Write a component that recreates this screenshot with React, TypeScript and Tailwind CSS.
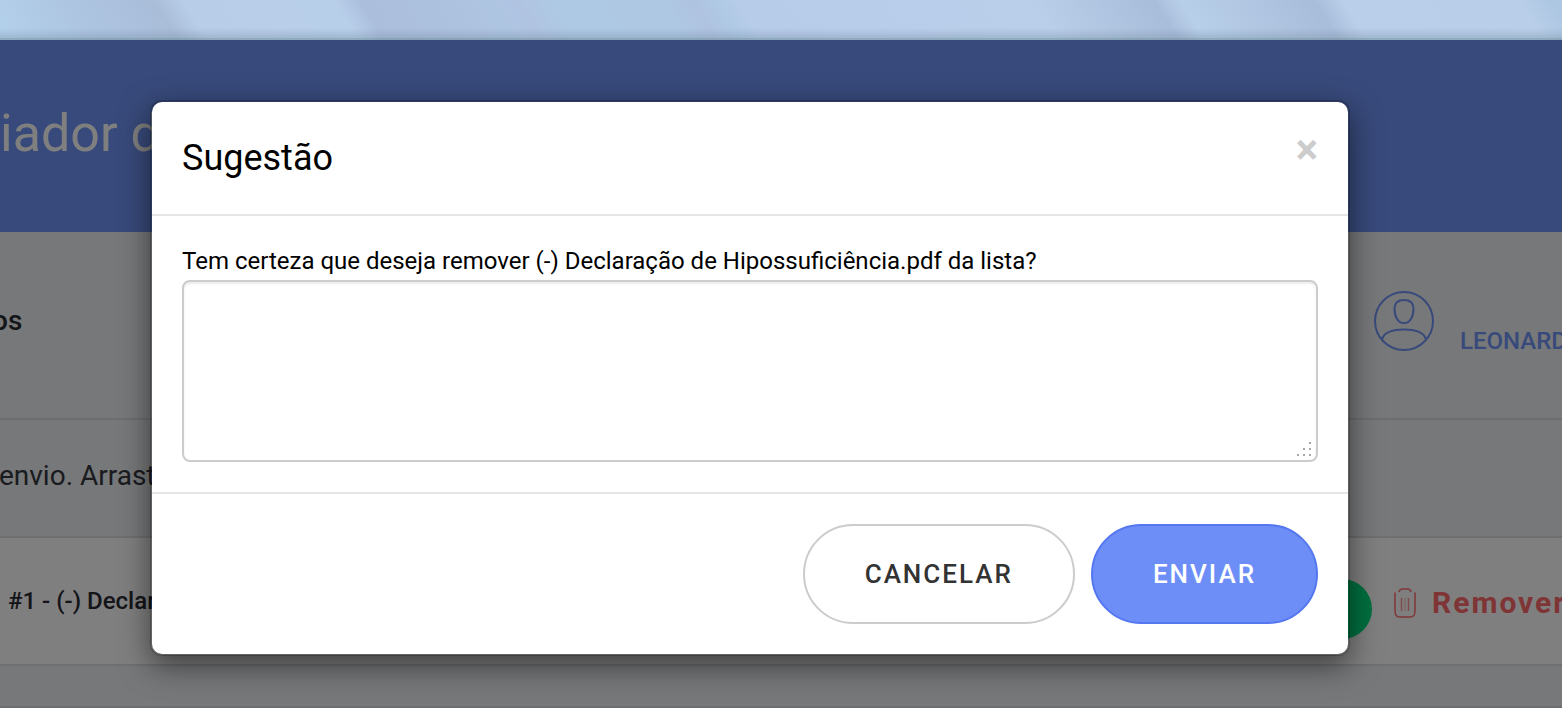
import React from "react";

const bands: [number, string][] = [
  [0, "#b3d0ea"],
  [35, "#b0cbe6"],
  [70, "#aec6e2"],
  [165, "#a9bdd9"],
  [195, "#b8cde8"],
  [345, "#b8cfea"],
  [372, "#abbfdc"],
  [460, "#adc2df"],
  [500, "#aec5e2"],
  [530, "#b0c4e2"],
  [565, "#aec9e4"],
  [670, "#aec8e3"],
  [704, "#afc3e0"],
  [728, "#afc9e5"],
  [750, "#b7cce9"],
  [1040, "#b9cfea"],
  [1165, "#a8bdd9"],
  [1192, "#b8cfea"],
  [1325, "#a8bdd9"],
  [1354, "#b9cfea"],
  [1530, "#b9cfe9"],
  [1562, "#adc6e2"],
];

function TopStrip() {
  return (
    <div className="relative h-10 shrink-0 overflow-hidden">
      <svg className="h-full w-full" viewBox="0 0 1562 40" preserveAspectRatio="none" aria-hidden="true">
        <defs>
          <linearGradient id="bands" gradientUnits="userSpaceOnUse" x1="0" y1="20" x2="1124" y2="-682">
            {bands.map(([x, color]) => (
              <stop key={x} offset={x / 1562} stopColor={color} />
            ))}
          </linearGradient>
          <linearGradient id="fade" x1="0" y1="0" x2="0" y2="1">
            <stop offset="0" stopColor="#5f7488" stopOpacity="0" />
            <stop offset="1" stopColor="#5f7488" stopOpacity="0.25" />
          </linearGradient>
        </defs>
        <rect width="1562" height="40" fill="url(#bands)" />
        <rect y="28" width="1562" height="10" fill="url(#fade)" />
        <rect y="38" width="1562" height="2" fill="#5f7f8c" fillOpacity="0.45" />
      </svg>
    </div>
  );
}

function UserIcon() {
  return (
    <svg className="h-[60px] w-[60px]" viewBox="0 0 60 60" fill="none" stroke="currentColor" strokeWidth="2" aria-hidden="true">
      <circle cx="30" cy="30" r="29" />
      <path d="M30 9c-6.500 0-9.500 3-9.500 8.500C20.500 26 24 32 30 32s9.500-6 9.500-14.500C39.500 12 36.500 9 30 9z" />
      <path d="M8.500 48C9 41.500 19 38.500 30 38.500S51 41.500 51.500 48" />
    </svg>
  );
}

function TrashIcon() {
  return (
    <svg className="h-[30px] w-[22px]" viewBox="0 0 22 30" fill="none" stroke="currentColor" aria-hidden="true">
      <path strokeWidth="1.500" d="M1 4.500V22c0 5 1 7 5 7h10c4 0 5-2 5-7V4.500" />
      <path strokeWidth="1.500" d="M5 4C5.500 1.500 6.500 1 8.500 1h5c2 0 3 .5 3.500 3" />
      <path strokeWidth="1.500" strokeOpacity="0.7" d="M7.500 10v13M14.500 10v13" />
      <path strokeWidth="1.500" strokeOpacity="0.35" d="M11 10v13" />
    </svg>
  );
}

export default function App() {
  return (
    <div className="flex min-h-screen flex-col overflow-hidden bg-[#eef0f2] font-['Roboto',sans-serif]">
      <TopStrip />
      <div className="relative flex grow flex-col">
        <header className="flex h-48 items-center bg-[#7094f6] pb-1">
          <h1 className="text-[52px] leading-[60px] font-normal whitespace-nowrap text-white">iador de</h1>
        </header>
        <section className="flex h-[188px] items-center justify-between border-b-2 border-[#d8dcde] pb-2 text-[#292b33]">
          <h2 className="-ml-2 text-[28px] leading-8 font-medium">os</h2>
          <a href="#perfil" className="-mr-20 flex w-[268px] items-center gap-[26px] text-[#7094f6]">
            <UserIcon />
            <span className="pt-10 text-2xl leading-8 font-medium">LEONARDO</span>
          </a>
        </section>
        <section className="flex h-[118px] items-center border-b-2 border-[#dcdfe2] pb-1">
          <p className="-ml-px text-[28px] leading-8 whitespace-nowrap text-[#35373f]">envio. Arraste</p>
        </section>
        <section className="flex h-32 items-center justify-between border-b-2 border-[#dcdfe2] bg-white">
          <p className="pl-2 text-2xl leading-8 font-medium whitespace-nowrap text-[#292b33]">#1 - (-) Declaração</p>
          <div className="-mr-10 flex w-[330px] items-center gap-[22px] pt-1">
            <button type="button" aria-label="Enviar arquivo" className="mt-3 h-[60px] w-[100px] rounded-full bg-[#00de7e]" />
            <button type="button" className="flex items-center gap-4 text-[30px] leading-9 font-bold tracking-[2px] text-[#ff6b6b]">
              <TrashIcon />
              Remover
            </button>
          </div>
        </section>
        <div className="h-[42px] border-b-2 border-[#d8dcde]" />

        <div className="absolute inset-0 bg-black/50 pt-[60px] pr-[212px] pl-[150px]">
          <div
            role="dialog"
            aria-labelledby="dialog-title"
            className="rounded-xl border-2 border-black/20 bg-white bg-clip-padding shadow-[0_10px_30px_rgba(0,0,0,0.5)]"
          >
            <div className="flex items-start justify-between border-b-2 border-[#e5e5e5] px-[30px] pt-[30px] pb-[30px]">
              <h2 id="dialog-title" className="text-4xl leading-[52px] text-black">Sugestão</h2>
              <button type="button" aria-label="Fechar" className="text-[42px] leading-9 font-bold text-[#cccccc]">×</button>
            </div>
            <form className="flex flex-col p-[30px]">
              <label htmlFor="motivo" className="pb-1 text-2xl leading-[30px] text-black">
                Tem certeza que deseja remover (-) Declaração de Hipossuficiência.pdf da lista?
              </label>
              <div className="relative flex">
                <textarea
                  id="motivo"
                  className="h-[182px] w-full resize-none rounded-lg border-2 border-[#cccccc] bg-white p-3 text-2xl shadow-[inset_0_2px_2px_rgba(0,0,0,0.075)] outline-none"
                />
                <svg className="pointer-events-none absolute right-[6px] bottom-1 h-4 w-4" viewBox="0 0 16 16" fill="#a8a8a8" aria-hidden="true">
                  <path d="M13 0h2v2h-2zM7 6h2v2H7zM13 6h2v2h-2zM1 12h2v2H1zM7 12h2v2H7zM13 12h2v2h-2z" />
                </svg>
              </div>
            </form>
            <div className="flex justify-end gap-4 border-t-2 border-[#e5e5e5] p-[30px]">
              <button type="button" className="h-[100px] rounded-full border-2 border-[#cccccc] bg-white px-[60px] text-[26px] font-medium tracking-[2px] text-[#333333]">
                CANCELAR
              </button>
              <button type="button" className="h-[100px] rounded-full border-2 border-[#5578f0] bg-[#6d8ef7] px-[60px] text-[26px] font-medium tracking-[2px] text-white">
                ENVIAR
              </button>
            </div>
          </div>
        </div>
      </div>
    </div>
  );
}
